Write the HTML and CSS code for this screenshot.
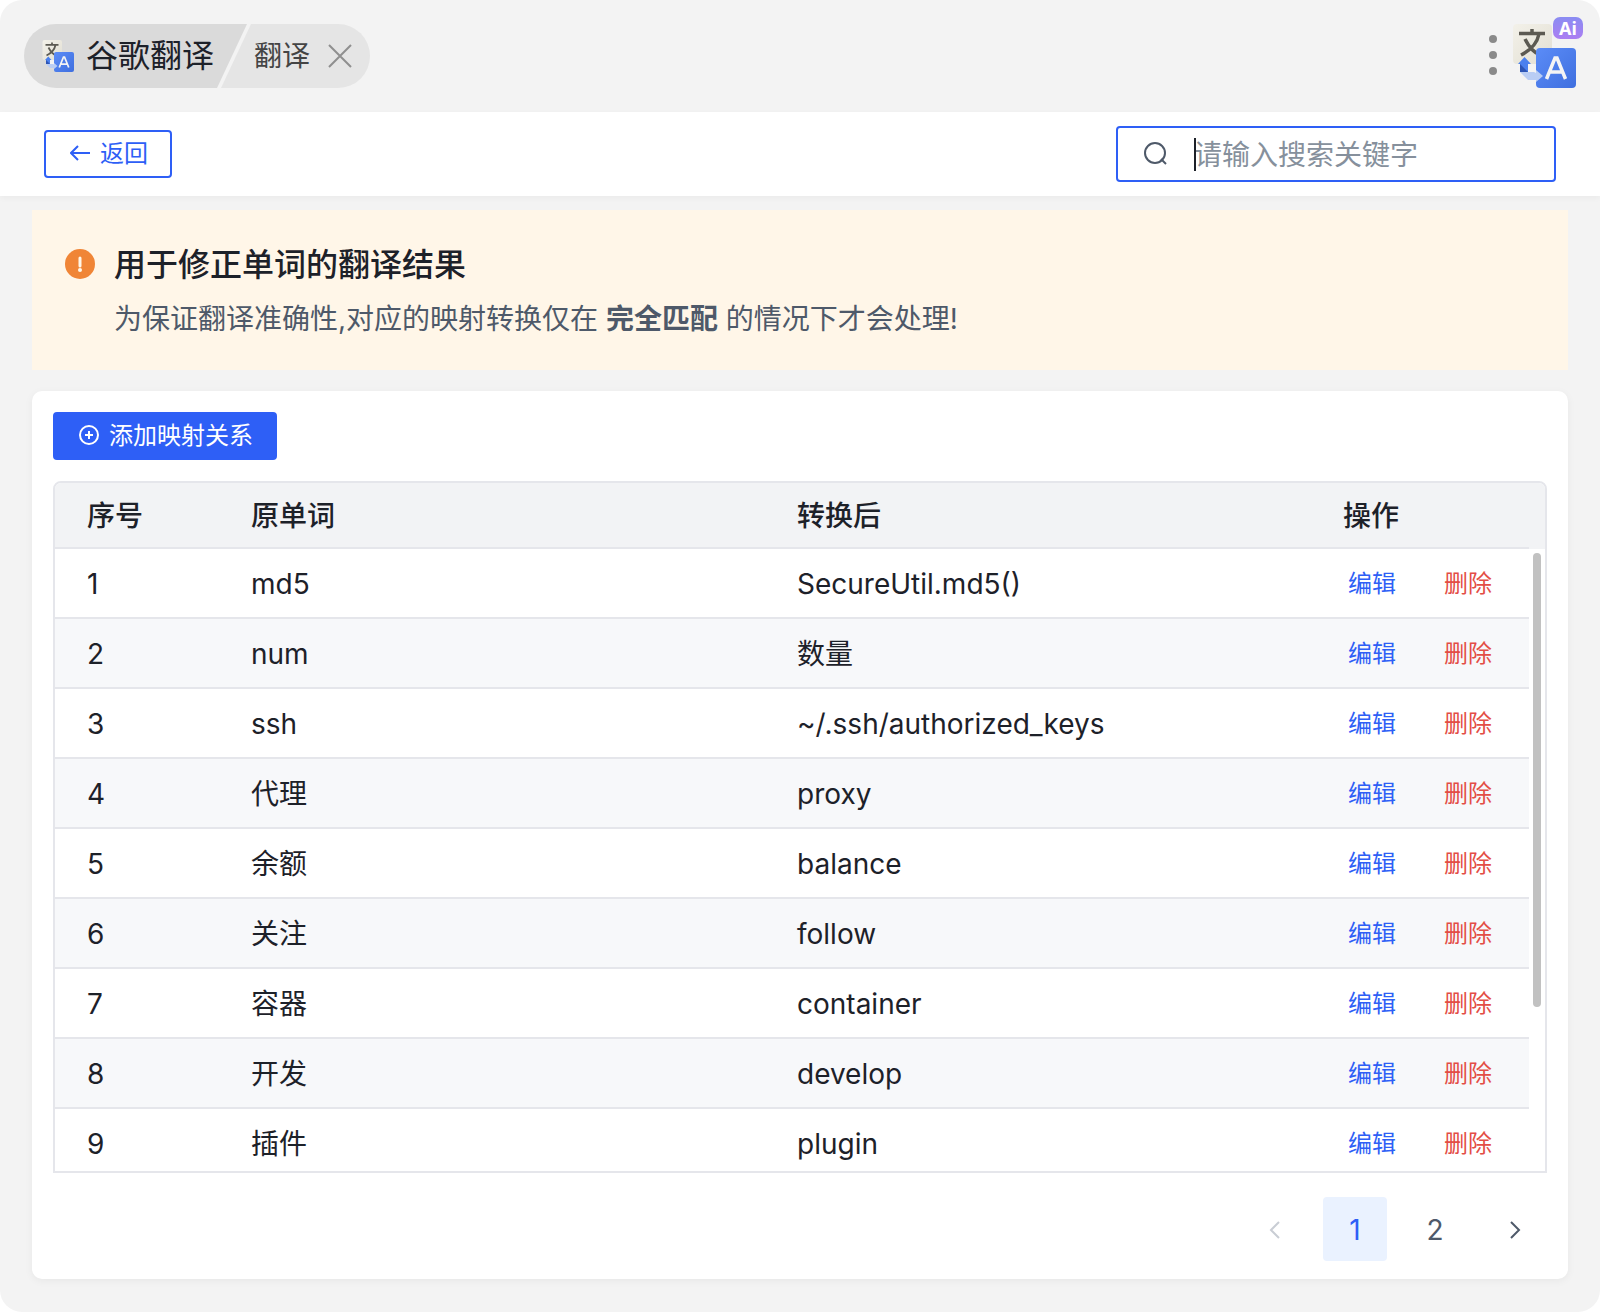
FILE: index.html
```html
<!DOCTYPE html>
<html lang="zh-CN">
<head>
<meta charset="utf-8">
<meta name="viewport" content="width=device-width, initial-scale=1">
<title>谷歌翻译</title>
<link rel="stylesheet" href="styles.css">
</head>
<body>
<svg class="defs" aria-hidden="true">
  <defs>
    <linearGradient id="paper" x1="0" y1="0" x2="1" y2="1"><stop offset="0" stop-color="#f3f1e9"/><stop offset="1" stop-color="#e2dfd3"/></linearGradient>
    <linearGradient id="blue" x1="0" y1="0" x2="1" y2="1"><stop offset="0" stop-color="#5b8cf7"/><stop offset="1" stop-color="#3f6fdf"/></linearGradient>
    <symbol id="translate" viewBox="0 0 64 64">
      <rect x="1" width="39" height="40" rx="4" fill="url(#paper)"/>
      <path d="M7 9.500H33M20 5V10M27 10C25 20 19 26 9 31M13 15C17 23 21 28 28 31" fill="none" stroke="#5c5a52" stroke-width="3.500"/>
      <path d="M16 40H24V48H34V56H16Z" fill="#f3f3f3"/>
      <path d="M8 48H22L24 49V46L31 52L24 58V56H16Z" fill="#b9cdf4"/>
      <rect x="24" y="24" width="40" height="40" rx="4" fill="url(#blue)"/>
      <path d="M24 46L31 52L24 58Z" fill="#b9cdf4"/>
      <path d="M12.500 33L19 40H16V48H8V40H6Z" fill="#4a80ee"/>
      <path d="M8 40L16 48H8Z" fill="#2d55b5"/>
      <path d="M34.500 55L43 34H45L53.500 55M37.500 48H50.500" fill="none" stroke="#f4f4f4" stroke-width="3.500"/>
    </symbol>
  </defs>
</svg>
<div class="window">
  <header class="titlebar">
    <div class="crumbs">
      <div class="crumb crumb-app">
        <svg class="crumb-logo" aria-hidden="true"><use href="#translate"/></svg>
        <span>谷歌翻译</span>
      </div>
      <div class="crumb crumb-feature">
        <span>翻译</span>
        <button class="icon-button" type="button" aria-label="关闭">
          <svg width="24" height="24" viewBox="0 0 24 24"><path d="M1 1L23 23M23 1L1 23" fill="none" stroke="#8f8f8f" stroke-width="2"/></svg>
        </button>
      </div>
    </div>
    <div class="titlebar-tools">
      <button class="icon-button" type="button" aria-label="菜单">
        <svg width="8" height="42" viewBox="0 0 8 42"><g fill="#8a8a8a"><circle cx="4" cy="4" r="4"/><circle cx="4" cy="20" r="4"/><circle cx="4" cy="36" r="4"/></g></svg>
      </button>
      <div class="app-logo">
        <svg width="64" height="64" aria-hidden="true"><use href="#translate"/></svg>
        <span class="ai-badge">Ai</span>
      </div>
    </div>
  </header>

  <div class="toolbar">
    <button class="button button-outline" type="button">
      <svg width="20" height="22" viewBox="0 0 20 22"><path d="M20 10H1M8 3L1 10L8 17" fill="none" stroke="currentColor" stroke-width="2"/></svg>
      <span>返回</span>
    </button>
    <label class="search">
      <svg width="24" height="24" viewBox="0 0 24 24" aria-hidden="true"><circle cx="11" cy="11" r="10" fill="none" stroke="#4e5969" stroke-width="2"/><path d="M17 17L22 22" stroke="#4e5969" stroke-width="2"/></svg>
      <span class="search-field">
        <input class="search-input" type="text" placeholder="请输入搜索关键字" aria-label="搜索">
        <span class="caret"></span>
      </span>
    </label>
  </div>

  <main class="content">
    <section class="alert">
      <svg class="alert-icon" width="30" height="30" viewBox="0 0 30 30" aria-hidden="true"><circle cx="15" cy="15" r="15" fill="#f08536"/><path d="M15 9V17" stroke="#fff7e8" stroke-width="3" stroke-linecap="round"/><circle cx="15" cy="21" r="2" fill="#fff7e8"/></svg>
      <div>
        <h1 class="alert-title">用于修正单词的翻译结果</h1>
        <p class="alert-text">为保证翻译准确性,对应的映射转换仅在 <strong>完全匹配</strong> 的情况下才会处理!</p>
      </div>
    </section>

    <section class="card">
      <button class="button button-primary" type="button">
        <svg width="20" height="22" viewBox="0 0 20 22"><path d="M10 6V14M6 10H14" stroke="currentColor" stroke-width="2"/><circle cx="10" cy="10" r="9" fill="none" stroke="currentColor" stroke-width="2"/></svg>
        <span>添加映射关系</span>
      </button>

      <div class="table-frame">
        <div class="table-scroll">
          <table class="table">
            <thead>
              <tr><th class="col-index">序号</th><th>原单词</th><th>转换后</th><th class="col-actions">操作</th></tr>
            </thead>
            <tbody>
              <tr><td>1</td><td>md5</td><td>SecureUtil.md5()</td><td><div class="actions"><button class="action edit" type="button">编辑</button><button class="action delete" type="button">删除</button></div></td></tr>
              <tr><td>2</td><td>num</td><td>数量</td><td><div class="actions"><button class="action edit" type="button">编辑</button><button class="action delete" type="button">删除</button></div></td></tr>
              <tr><td>3</td><td>ssh</td><td>~/.ssh/authorized_keys</td><td><div class="actions"><button class="action edit" type="button">编辑</button><button class="action delete" type="button">删除</button></div></td></tr>
              <tr><td>4</td><td>代理</td><td>proxy</td><td><div class="actions"><button class="action edit" type="button">编辑</button><button class="action delete" type="button">删除</button></div></td></tr>
              <tr><td>5</td><td>余额</td><td>balance</td><td><div class="actions"><button class="action edit" type="button">编辑</button><button class="action delete" type="button">删除</button></div></td></tr>
              <tr><td>6</td><td>关注</td><td>follow</td><td><div class="actions"><button class="action edit" type="button">编辑</button><button class="action delete" type="button">删除</button></div></td></tr>
              <tr><td>7</td><td>容器</td><td>container</td><td><div class="actions"><button class="action edit" type="button">编辑</button><button class="action delete" type="button">删除</button></div></td></tr>
              <tr><td>8</td><td>开发</td><td>develop</td><td><div class="actions"><button class="action edit" type="button">编辑</button><button class="action delete" type="button">删除</button></div></td></tr>
              <tr><td>9</td><td>插件</td><td>plugin</td><td><div class="actions"><button class="action edit" type="button">编辑</button><button class="action delete" type="button">删除</button></div></td></tr>
            </tbody>
          </table>
        </div>
        <div class="scroll-track"><div class="scroll-thumb"></div></div>
      </div>

      <nav class="pagination" aria-label="分页">
        <button class="page" type="button" disabled aria-label="上一页"><svg width="12" height="18" viewBox="0 0 12 18"><path d="M10 1L2 9L10 17" fill="none" stroke="currentColor" stroke-width="2"/></svg></button>
        <button class="page page-current" type="button" aria-current="page">1</button>
        <button class="page" type="button">2</button>
        <button class="page" type="button" aria-label="下一页"><svg width="12" height="18" viewBox="0 0 12 18"><path d="M2 1L10 9L2 17" fill="none" stroke="currentColor" stroke-width="2"/></svg></button>
      </nav>
    </section>
  </main>
</div>
</body>
</html>
```
FILE: styles.css
```css
* {
  box-sizing: border-box;
}

body {
  margin: 0;
  background: #fff;
  color: #1d2129;
  font: 28px/44px Inter, "Noto Sans CJK SC", sans-serif;
}

button,
input {
  margin: 0;
  padding: 0;
  border: 0;
  background: none;
  color: inherit;
  font: inherit;
}

svg {
  display: block;
  flex: none;
}

.defs {
  position: absolute;
  width: 0;
  height: 0;
}

.window {
  display: flex;
  flex-direction: column;
  height: 100vh;
  min-height: 800px;
  border-radius: 22px;
  background: #f3f3f3;
  overflow: hidden;
}

/* Title bar */
.titlebar {
  display: flex;
  justify-content: space-between;
  align-items: flex-start;
  padding: 24px;
}

.crumbs {
  display: flex;
  border-radius: 32px;
  overflow: hidden;
}

.crumb {
  display: flex;
  align-items: center;
  height: 64px;
}

.crumb-app {
  gap: 12px;
  padding: 0 33px 0 18px;
  background: #dadada;
  clip-path: polygon(0 0, 100% 0, calc(100% - 30px) 100%, 0 100%);
  font-size: 32px;
}

.crumb-feature {
  gap: 18px;
  margin-left: -26px;
  padding: 0 18px 0 33px;
  background: #e5e5e5;
  clip-path: polygon(30px 0, 100% 0, 100% 100%, 0 100%);
  color: #444;
}

.crumb-logo {
  width: 32px;
  height: 32px;
}

.icon-button {
  display: flex;
}

.titlebar-tools {
  display: flex;
  align-items: center;
  gap: 15px;
}

.app-logo {
  position: relative;
}

.ai-badge {
  position: absolute;
  top: -7px;
  right: -7px;
  width: 30px;
  border-radius: 7px;
  background: linear-gradient(#8a8cf2, #ab7ef2);
  color: #fff;
  font: 700 18px/22px "Noto Sans", sans-serif;
  text-align: center;
}

/* Toolbar */
.toolbar {
  display: flex;
  justify-content: space-between;
  align-items: center;
  height: 84px;
  padding: 0 44px;
  background: #fff;
  box-shadow: 0 2px 6px rgba(0, 0, 0, 0.04);
}

.button {
  display: flex;
  align-items: center;
  gap: 10px;
  height: 48px;
  padding: 0 22px 0 24px;
  border: 2px solid #2e5ff6;
  border-radius: 4px;
  font-size: 24px;
}

.button-outline {
  color: #2e5ff6;
}

.button-primary {
  align-self: flex-start;
  background: #2e5ff6;
  color: #fff;
}

.search {
  display: flex;
  align-items: center;
  gap: 26px;
  width: 440px;
  height: 56px;
  padding: 0 24px 0 26px;
  border: 2px solid #2e5ff6;
  border-radius: 4px;
}

.search-field {
  position: relative;
  display: flex;
  flex: 1;
}

.search-input {
  width: 100%;
  padding-top: 1px;
  outline: none;
}

.search-input::placeholder {
  color: #86909c;
  opacity: 1;
}

.caret {
  position: absolute;
  top: 6px;
  left: 0;
  width: 2px;
  height: 33px;
  background: #1d2129;
}

/* Content */
.content {
  display: flex;
  flex: 1;
  flex-direction: column;
  gap: 21px;
  min-height: 0;
  padding: 14px 32px 33px;
}

.alert {
  display: flex;
  gap: 19px;
  padding: 31px 33px 29px;
  background: #fff6e8;
}

.alert-icon {
  margin-top: 8px;
}

.alert-title {
  margin: 0 0 8px;
  font-size: 32px;
  font-weight: 500;
  line-height: 48px;
}

.alert-text {
  margin: 0;
  color: #4e5969;
}

.card {
  display: flex;
  flex: 1;
  flex-direction: column;
  min-height: 0;
  padding: 21px 21px 18px;
  border-radius: 10px;
  background: #fff;
  box-shadow: 0 2px 8px rgba(0, 0, 0, 0.05);
}

/* Table */
.table-frame {
  position: relative;
  display: flex;
  flex: 1;
  min-height: 0;
  margin: 21px 0 24px;
  border: 2px solid #e5e6eb;
  border-radius: 8px 8px 0 0;
  overflow: hidden;
}

.table-scroll {
  flex: 1;
  overflow: hidden auto;
  scrollbar-width: none;
}

.table {
  width: calc(100% - 16px);
  border-spacing: 0;
  table-layout: fixed;
}

.table th,
.table td {
  height: 70px;
  padding: 2px 32px 0;
  border-bottom: 2px solid #e5e6eb;
  text-align: left;
}

.table th {
  position: sticky;
  top: 0;
  height: 66px;
  background: #f2f3f5;
  font-weight: 500;
}

.table .col-index {
  width: 164px;
}

.table .col-actions {
  width: 218px;
}

.col-actions::after {
  content: "";
  position: absolute;
  top: 0;
  right: -16px;
  bottom: -2px;
  width: 16px;
  background: #f2f3f5;
}

.table tbody tr:nth-child(even) {
  background: #f7f8fa;
}

.actions {
  display: flex;
  gap: 38px;
}

.action {
  padding: 0 5px;
  font-size: 24px;
  white-space: nowrap;
}

.edit {
  color: #2e5ff6;
}

.delete {
  color: #e34d45;
}

.scroll-track {
  position: absolute;
  top: 70px;
  right: 4px;
  bottom: 4px;
  width: 8px;
}

.scroll-thumb {
  height: 74%;
  border-radius: 4px;
  background: #c1c1c1;
}

/* Pagination */
.pagination {
  display: flex;
  justify-content: flex-end;
  gap: 16px;
}

.page {
  display: flex;
  align-items: center;
  justify-content: center;
  width: 64px;
  height: 64px;
  padding-top: 1px;
  border-radius: 4px;
  color: #4e5969;
}

.page:disabled {
  color: #c9cdd4;
}

.page-current {
  background: #eaf2ff;
  color: #2e5ff6;
}
```
